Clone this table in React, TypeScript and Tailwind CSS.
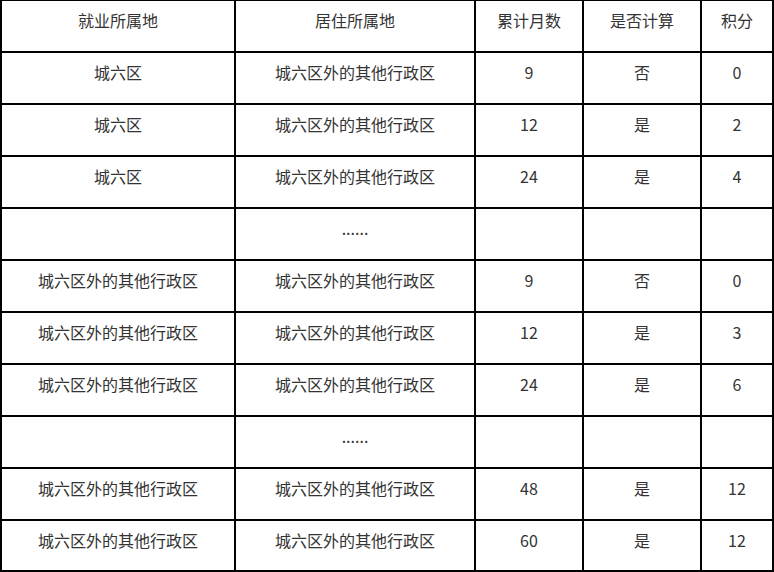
import React from "react";

const header = ["就业所属地", "居住所属地", "累计月数", "是否计算", "积分"];

const rows: string[][] = [
  ["城六区", "城六区外的其他行政区", "9", "否", "0"],
  ["城六区", "城六区外的其他行政区", "12", "是", "2"],
  ["城六区", "城六区外的其他行政区", "24", "是", "4"],
  ["", "......", "", "", ""],
  ["城六区外的其他行政区", "城六区外的其他行政区", "9", "否", "0"],
  ["城六区外的其他行政区", "城六区外的其他行政区", "12", "是", "3"],
  ["城六区外的其他行政区", "城六区外的其他行政区", "24", "是", "6"],
  ["", "......", "", "", ""],
  ["城六区外的其他行政区", "城六区外的其他行政区", "48", "是", "12"],
  ["城六区外的其他行政区", "城六区外的其他行政区", "60", "是", "12"],
];

export default function App() {
  const all = [header, ...rows];
  return (
    <div
      className="w-[774px] h-[572px] bg-white overflow-hidden"
      style={{ fontFamily: '"Noto Sans CJK SC", "Noto Sans", sans-serif' }}
    >
      <div className="grid grid-cols-[232px_238px_106px_116px_70px] grid-rows-[repeat(10,50px)_49px] gap-[2px] bg-black pt-px px-[2px] pb-[2px] w-[774px] h-[572px]">
        {all.map((r, i) =>
          r.map((c, j) => (
            <div
              key={`${i}-${j}`}
              className="bg-white flex items-center justify-center pb-3 text-[16px] leading-none text-[#333]"
            >
              {c}
            </div>
          ))
        )}
      </div>
    </div>
  );
}
